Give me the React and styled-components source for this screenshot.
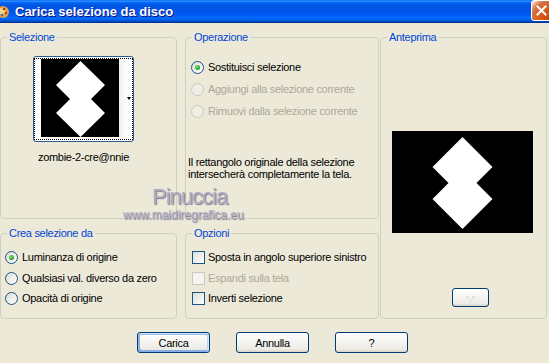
import React from 'react';
import styled, { createGlobalStyle } from 'styled-components';

const GlobalStyle = createGlobalStyle`
    html, body {
        margin: 0;
        padding: 0;
        background: #ece9d8;
        overflow: hidden;
    }
    * {
        box-sizing: border-box;
    }
`;

const Window = styled.div`
    width: 549px;
    height: 363px;
    display: flex;
    flex-direction: column;
    background: #ece9d8;
    font-family: "Liberation Sans", Arial, sans-serif;
    font-size: 11px;
    letter-spacing: -0.3px;
    color: #000;
`;

const TitleBar = styled.div`
    height: 23px;
    display: flex;
    align-items: center;
    background: linear-gradient(to bottom, #0058ee 0%, #3593ff 4%, #288eff 6%, #127dff 8%, #036ffc 10%, #0262ee 14%, #0057e5 20%, #0054e3 24%, #0055eb 56%, #005bf5 66%, #026afe 76%, #0062ef 86%, #0052d6 92%, #0040ab 94%, #003092 100%);
`;

const TitleIcon = styled.svg`
    width: 12px;
    height: 16px;
    margin-left: -2px;
    flex-shrink: 0;
`;

const TitleText = styled.div`
    margin-left: 5px;
    flex: 1;
    color: #fff;
    font-weight: bold;
    font-size: 13px;
    letter-spacing: 0;
    text-shadow: 1px 1px 0 #0f1089;
`;

const CloseButton = styled.div`
    width: 21px;
    height: 21px;
    margin-right: -3px;
    align-self: flex-start;
    margin-top: 0;
    border: 1px solid #fff;
    border-radius: 3px;
    background: radial-gradient(circle at 90% 90%, #cc4600 0%, #dc6527 55%, #cd7546 70%, #ffccb2 90%, #fff 100%);
    display: flex;
    align-items: center;
    justify-content: center;
`;

const Body = styled.div`
    position: relative;
    flex: 1;
    padding-top: 14px;
    display: flex;
    flex-direction: column;
`;

const Grid = styled.div`
    display: grid;
    grid-template-columns: 177px 8px 194px 1px 167px;
    grid-template-rows: 182px 14px 86px;
`;

const Group = styled.div`
    position: relative;
    grid-column: ${p => p.$col};
    grid-row: ${p => p.$row};
    border: 1px solid #d0d0bf;
    border-radius: 4px;
    display: flex;
    flex-direction: column;
    padding: ${p => p.$pad || '0'};
`;

const Legend = styled.span`
    position: absolute;
    top: -7px;
    left: 6px;
    padding: 0 2px;
    line-height: 13px;
    background: #ece9d8;
    color: #0046d5;
`;

const ThumbColumn = styled.div`
    width: 101px;
    margin-left: 32px;
    display: flex;
    flex-direction: column;
    align-items: center;
`;

const ThumbFrame = styled.div`
    width: 101px;
    height: 86px;
    padding: 1px 0;
    border: 1px solid #2c5a8c;
    border-radius: 3px;
    background: #fff;
`;

const ThumbInner = styled.div`
    height: 100%;
    border: 1px dotted #000;
    padding: 0 0 2px 6px;
    display: flex;
`;

const ArrowStrip = styled.div`
    flex: 1;
    display: flex;
    align-items: center;
    justify-content: flex-end;
    padding-right: 1px;
    background: linear-gradient(to right, #eeeeee 0, #fafafa 5px, #ffffff 100%);
`;

const DownArrow = styled.div`
    width: 0;
    height: 0;
    border-left: 2.5px solid transparent;
    border-right: 2.5px solid transparent;
    border-top: 3px solid #000;
`;

const Caption = styled.div`
    margin-top: 9px;
    line-height: 13px;
    white-space: nowrap;
`;

const OptionList = styled.div`
    display: flex;
    flex-direction: column;
    gap: ${p => p.$gap}px;
`;

const OptionRow = styled.label`
    display: flex;
    align-items: center;
    gap: ${p => p.$gap || 4}px;
    height: 13px;
    line-height: 13px;
    white-space: nowrap;
    color: ${p => (p.$disabled ? '#aca899' : '#000')};
`;

const Radio = styled.span`
    position: relative;
    width: 13px;
    height: 13px;
    flex-shrink: 0;
    border-radius: 50%;
    border: 1px solid ${p => (p.$disabled ? '#cac8bb' : '#1d5281')};
    background: ${p => (p.$disabled ? '#f1efe5' : 'linear-gradient(135deg, #dcdcd7, #ffffff)')};

    &::after {
        content: '';
        display: ${p => (p.$checked ? 'block' : 'none')};
        position: absolute;
        left: 3px;
        top: 3px;
        width: 5px;
        height: 5px;
        border-radius: 50%;
        background: radial-gradient(circle at 35% 35%, #7be07b 0%, #2fb32f 55%, #1a8a1a 100%);
    }
`;

const Checkbox = styled.span`
    width: 13px;
    height: 13px;
    flex-shrink: 0;
    border: 1px solid ${p => (p.$disabled ? '#cac8bb' : '#1d5281')};
    background: ${p => (p.$disabled ? '#f4f3ee' : 'linear-gradient(135deg, #dcdcd7, #ffffff)')};
`;

const Note = styled.div`
    margin: 38px 0 0 -3px;
    line-height: 12px;
`;

const PreviewBox = styled.div`
    width: 141px;
    height: 102px;
    margin-left: 11px;
    background: #000;
`;

const SmallButton = styled.div`
    width: 37px;
    height: 19px;
    margin: 55px 0 0 71px;
    border: 1px solid #003c74;
    border-radius: 3px;
    background: linear-gradient(180deg, #fff, #ecebe5 86%, #d8d0c4);
    display: flex;
    align-items: center;
    justify-content: center;
`;

const ButtonRow = styled.div`
    display: flex;
    gap: 26px;
    padding-left: 137px;
    margin-top: 13px;
`;

const Button = styled.div`
    width: 73px;
    height: 21px;
    border: 1px solid #003c74;
    border-radius: 3px;
    background: linear-gradient(180deg, #fff, #ecebe5 86%, #d8d0c4);
    display: flex;
    align-items: center;
    justify-content: center;
    box-shadow: ${p => (p.$default
        ? 'inset -1px 1px #cee7ff, inset 1px 2px #98b8ea, inset -2px 2px #bcd4f6, inset 1px -1px #89ade4, inset 2px -2px #89ade4'
        : 'none')};
`;

const Watermark = styled.div`
    position: absolute;
    left: ${p => p.$x}px;
    top: ${p => p.$y}px;
    font-family: "Liberation Sans", Arial, sans-serif;
    font-size: ${p => p.$size}px;
    letter-spacing: ${p => p.$spacing}px;
    line-height: 1;
    color: #adadc6;
    text-shadow: 1px 1px 1px #77778c;
    white-space: nowrap;
    pointer-events: none;
`;

const Diamonds = ({ width, height, d }) => (
    <svg width={width} height={height} viewBox={`0 0 ${width} ${height}`} style={{ display: 'block' }}>
        <rect width={width} height={height} fill="#000" />
        <path d={d} fill="#fff" />
    </svg>
);

export default function App() {
    return (
        <>
            <GlobalStyle />
            <Window>
                <TitleBar>
                    <TitleIcon viewBox="0 0 12 16">
                        <ellipse cx="5" cy="8" rx="6" ry="6" fill="#e8a040" />
                        <ellipse cx="4" cy="7" rx="3" ry="3" fill="#f6d38a" />
                        <circle cx="6" cy="5" r="1.2" fill="#7a3c10" />
                        <circle cx="8" cy="9" r="1.2" fill="#b8401c" />
                        <circle cx="4" cy="11" r="1.2" fill="#3d6fc2" />
                    </TitleIcon>
                    <TitleText>Carica selezione da disco</TitleText>
                    <CloseButton>
                        <svg width="11" height="11" viewBox="0 0 11 11">
                            <path d="M1.5 1.5 L9.5 9.5 M9.5 1.5 L1.5 9.5" stroke="#fff" strokeWidth="2" strokeLinecap="square" />
                        </svg>
                    </CloseButton>
                </TitleBar>
                <Body>
                    <Grid>
                        <Group $col="1" $row="1" $pad="18px 0 0 0">
                            <Legend>Selezione</Legend>
                            <ThumbColumn>
                                <ThumbFrame>
                                    <ThumbInner>
                                        <Diamonds width={78} height={78} d="M39.5 2 L64 26 L50 40 L64 54 L39.5 78 L15 54 L29 40 L15 26 Z" />
                                        <ArrowStrip>
                                            <DownArrow />
                                        </ArrowStrip>
                                    </ThumbInner>
                                </ThumbFrame>
                                <Caption>zombie-2-cre@nnie</Caption>
                            </ThumbColumn>
                        </Group>

                        <Group $col="3" $row="1" $pad="23px 0 0 5px">
                            <Legend>Operazione</Legend>
                            <OptionList $gap={9}>
                                <OptionRow><Radio $checked />Sostituisci selezione</OptionRow>
                                <OptionRow $disabled><Radio $disabled />Aggiungi alla selezione corrente</OptionRow>
                                <OptionRow $disabled><Radio $disabled />Rimuovi dalla selezione corrente</OptionRow>
                            </OptionList>
                            <Note>
                                Il rettangolo originale della selezione<br />
                                intersecherà completamente la tela.
                            </Note>
                        </Group>

                        <Group $col="5" $row="1 / 4" $pad="93px 0 0 0">
                            <Legend>Anteprima</Legend>
                            <PreviewBox>
                                <Diamonds width={141} height={102} d="M70.5 6 L100.5 36 L84.5 52 L100.5 68 L70.5 98 L40.5 68 L56.5 52 L40.5 36 Z" />
                            </PreviewBox>
                            <SmallButton>
                                <svg width="14" height="8" viewBox="0 0 14 8">
                                    <rect x="2" y="2" width="3" height="3" fill="#e4e4e4" />
                                    <rect x="8" y="2" width="3" height="3" fill="#e4e4e4" />
                                    <rect x="5" y="5" width="3" height="3" fill="#e4e4e4" />
                                </svg>
                            </SmallButton>
                        </Group>

                        <Group $col="1" $row="3" $pad="17px 0 0 4px">
                            <Legend>Crea selezione da</Legend>
                            <OptionList $gap={7.5}>
                                <OptionRow><Radio $checked />Luminanza di origine</OptionRow>
                                <OptionRow><Radio />Qualsiasi val. diverso da zero</OptionRow>
                                <OptionRow><Radio />Opacità di origine</OptionRow>
                            </OptionList>
                        </Group>

                        <Group $col="3" $row="3" $pad="17px 0 0 6px">
                            <Legend>Opzioni</Legend>
                            <OptionList $gap={7.5}>
                                <OptionRow $gap={3}><Checkbox />Sposta in angolo superiore sinistro</OptionRow>
                                <OptionRow $gap={3} $disabled><Checkbox $disabled />Espandi sulla tela</OptionRow>
                                <OptionRow $gap={3}><Checkbox />Inverti selezione</OptionRow>
                            </OptionList>
                        </Group>
                    </Grid>

                    <ButtonRow>
                        <Button $default>Carica</Button>
                        <Button>Annulla</Button>
                        <Button>?</Button>
                    </ButtonRow>

                    <Watermark $x={152} $y={163} $size={22} $spacing={-1}>Pinuccia</Watermark>
                    <Watermark $x={123} $y={186} $size={12} $spacing={0}>www.maidiregrafica.eu</Watermark>
                </Body>
            </Window>
        </>
    );
}
